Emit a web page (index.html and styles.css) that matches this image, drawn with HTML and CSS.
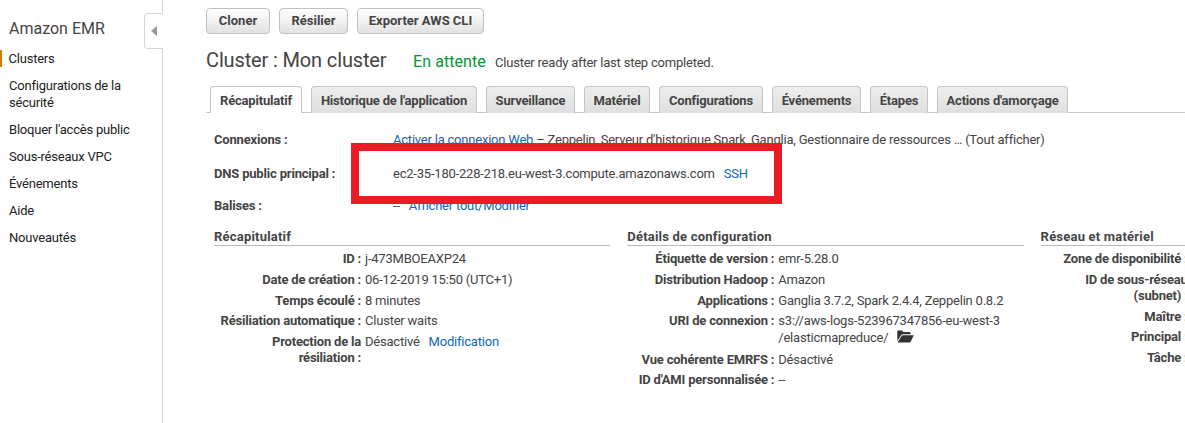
FILE: index.html
```html
<!DOCTYPE html>
<html lang="fr">
<head>
<meta charset="utf-8">
<title>Amazon EMR</title>
<link rel="stylesheet" href="styles.css">
</head>
<body>
<div class="app">
  <nav class="sidebar">
    <h1 class="service">Amazon EMR</h1>
    <ul class="menu">
      <li class="menu-item active">Clusters</li>
      <li class="menu-item">Configurations de la sécurité</li>
      <li class="menu-item">Bloquer l'accès public</li>
      <li class="menu-item">Sous-réseaux VPC</li>
      <li class="menu-item">Événements</li>
      <li class="menu-item">Aide</li>
      <li class="menu-item">Nouveautés</li>
    </ul>
    <div class="collapse"><svg width="6" height="10" viewBox="0 0 6 10"><path d="M6 0v10L0 5z" fill="#999"/></svg></div>
  </nav>
  <main class="content">
    <div class="actions">
      <button class="btn clone">Cloner</button>
      <button class="btn stop">Résilier</button>
      <button class="btn export">Exporter AWS CLI</button>
    </div>
    <header class="title">
      <h2 class="name">Cluster : Mon cluster</h2>
      <span class="state">En attente</span>
      <span class="reason">Cluster ready after last step completed.</span>
    </header>
    <div class="tabs">
      <div class="tab w92 selected">Récapitulatif</div>
      <div class="tab w166">Historique de l'application</div>
      <div class="tab w89">Surveillance</div>
      <div class="tab w66">Matériel</div>
      <div class="tab w104">Configurations</div>
      <div class="tab w89">Événements</div>
      <div class="tab w58">Étapes</div>
      <div class="tab w131">Actions d'amorçage</div>
    </div>
    <section class="overview">
      <div class="line connections"><b class="key">Connexions :</b><span><a class="link">Activer la connexion Web</a> – Zeppelin, Serveur d'historique Spark, Ganglia, Gestionnaire de ressources … (Tout afficher)</span></div>
      <div class="line dns"><b class="key">DNS public principal :</b><span>ec2-35-180-228-218.eu-west-3.compute.amazonaws.com</span><a class="link ssh">SSH</a></div>
      <div class="line tags"><b class="key">Balises :</b><span>--</span><a class="link edit-tags">Afficher tout/Modifier</a></div>
      <div class="highlight"></div>
    </section>
    <div class="columns">
      <section class="panel">
        <h3 class="panel-title">Récapitulatif</h3>
        <dl class="props">
          <dt>ID :</dt><dd>j-473MBOEAXP24</dd>
          <dt>Date de création :</dt><dd>06-12-2019 15:50 (UTC+1)</dd>
          <dt>Temps écoulé :</dt><dd>8 minutes</dd>
          <dt>Résiliation automatique :</dt><dd>Cluster waits</dd>
          <dt>Protection de la<br>résiliation :</dt><dd>Désactivé <a class="link modify">Modification</a></dd>
        </dl>
      </section>
      <section class="panel">
        <h3 class="panel-title">Détails de configuration</h3>
        <dl class="props">
          <dt>Étiquette de version :</dt><dd>emr-5.28.0</dd>
          <dt>Distribution Hadoop :</dt><dd>Amazon</dd>
          <dt>Applications :</dt><dd>Ganglia 3.7.2, Spark 2.4.4, Zeppelin 0.8.2</dd>
          <dt>URI de connexion :</dt><dd class="uri">s3://aws-logs-523967347856-eu-west-3<br>/elasticmapreduce/<svg class="folder" width="17" height="13" viewBox="0 0 17 13"><path d="M.3 11V1.5Q.3.5 1.3.5H5L6.2 2H12.5Q13.5 2 13.5 3V4.3H6Q4.8 4.3 4.1 5.3Z" fill="#333"/><path d="M.5 12.4 4.4 6.3Q5 5.3 6 5.3H16.8L13.8 11.4Q13.3 12.4 12.3 12.4Z" fill="#333"/></svg></dd>
          <dt>Vue cohérente EMRFS :</dt><dd>Désactivé</dd>
          <dt>ID d'AMI personnalisée :</dt><dd>--</dd>
        </dl>
      </section>
      <section class="panel">
        <h3 class="panel-title">Réseau et matériel</h3>
        <dl class="props">
          <dt>Zone de disponibilité :</dt><dd></dd>
          <dt>ID de sous-réseau<br>(subnet) :</dt><dd></dd>
          <dt>Maître :</dt><dd></dd>
          <dt>Principal :</dt><dd></dd>
          <dt>Tâche :</dt><dd></dd>
        </dl>
      </section>
    </div>
  </main>
</div>
</body>
</html>
```
FILE: styles.css
```css
* { box-sizing: border-box; }
body { margin: 0; background: #fff; color: #444; font: 13px/16px Roboto, "Liberation Sans", sans-serif; letter-spacing: -0.215px; overflow: hidden; }
h1, h2, h3, ul, dl, dd { margin: 0; padding: 0; font-weight: 400; }
.app { display: flex; width: 1185px; height: 423px; overflow: hidden; }
.link { color: #1166bb; }

.sidebar { position: relative; flex: none; width: 163px; border-right: 1px solid #d5d5d5; color: #222; }
.service { padding: 18px 0 0 9px; font-size: 16px; line-height: 22px; letter-spacing: 0; color: #444; }
.menu { list-style: none; padding-top: 10px; }
.menu-item { padding: 0 26px 0 9px; margin-bottom: 10px; line-height: 17px; }
.active { border-left: 2px solid #e07700; padding-left: 6.5px; }
.collapse { position: absolute; top: 13px; right: -1px; width: 19px; height: 36px; display: flex; align-items: center; justify-content: center; border: 1px solid #d5d5d5; border-right: 0; border-radius: 4px 0 0 4px; background: #fff; }

.content { flex: none; width: 1022px; padding-left: 43px; white-space: nowrap; }
.actions { display: flex; gap: 9px; padding-top: 8px; }
.btn { height: 26px; padding: 0; border: 1px solid #c1c1c1; border-radius: 4px; background: linear-gradient(#fff, #e2e2e2); color: #444; font: bold 13px/16px Roboto, sans-serif; letter-spacing: 0; }
.clone { width: 64px; }
.stop { width: 69px; }
.export { width: 127px; }

.title { display: flex; align-items: baseline; height: 52px; padding-top: 13px; line-height: 26px; }
.name { width: 207px; font-size: 20px; letter-spacing: -0.14px; }
.state { width: 82px; font-size: 16px; letter-spacing: 0.08px; color: #009933; }

.tabs { display: flex; gap: 9px; height: 27px; padding-left: 4px; background: linear-gradient(#c5c5c5, #c5c5c5) 0 26px / 100% 1px no-repeat; }
.tab { height: 27px; border: 1px solid #c5c5c5; border-bottom: 0; border-radius: 4px 4px 0 0; background: linear-gradient(#ededed, #dfdfdf); font-weight: 700; line-height: 27px; letter-spacing: -0.19px; text-align: center; }
.selected { background: #fff; }
.w92 { width: 92px; }
.w166 { width: 166px; }
.w89 { width: 89px; }
.w66 { width: 66px; }
.w104 { width: 104px; }
.w58 { width: 58px; }
.w131 { width: 131px; }

.overview { position: relative; height: 115px; padding: 19px 0 0 8px; }
.line { display: flex; }
.key { width: 179px; letter-spacing: -0.18px; }
.dns { margin-top: 18px; }
.tags { margin-top: 16px; }
.ssh, .edit-tags { margin-left: 9px; }
.highlight { position: absolute; left: 145px; top: 30px; width: 431px; height: 61px; border: 8px solid #ed1c24; }

.columns { display: flex; gap: 17px; padding-left: 8px; }
.panel { flex: none; width: 396.3px; }
.panel-title { height: 18px; padding-top: 1px; border-bottom: 1px solid #bbb; font-size: 13px; font-weight: 700; letter-spacing: 0.21px; }
.props { display: grid; grid-template-columns: 147px 1fr; column-gap: 4px; row-gap: 4.8px; padding-top: 5px; }
.props dt { text-align: right; font-weight: 700; letter-spacing: -0.2px; }
.uri { line-height: 16.7px; }
.modify { margin-left: 6px; }
.folder { margin-left: 9px; vertical-align: -1px; }
```
